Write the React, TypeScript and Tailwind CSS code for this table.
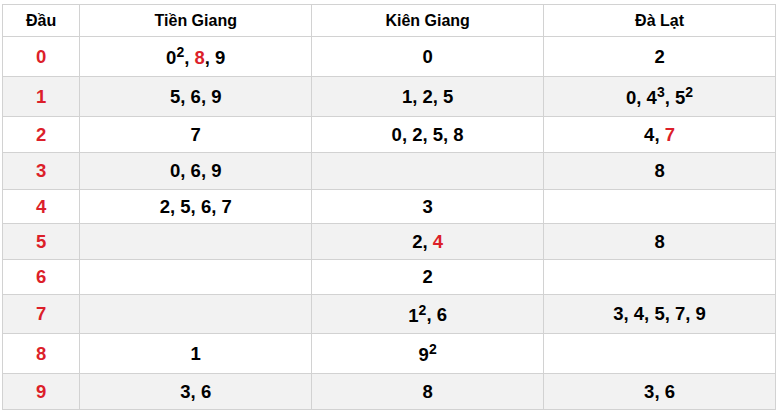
type Part = string | { n: string; sup?: string; red?: boolean };

interface Row {
  dau: string;
  h: string;
  cols: Part[][];
}

// each number: plain digit, or with a superscript count, or highlighted in red
const rows: Row[] = [
  { dau: '0', h: 'h-[40px]', cols: [[{ n: '0', sup: '2' }, { n: '8', red: true }, '9'], ['0'], ['2']] },
  { dau: '1', h: 'h-[40px]', cols: [['5', '6', '9'], ['1', '2', '5'], ['0', { n: '4', sup: '3' }, { n: '5', sup: '2' }]] },
  { dau: '2', h: 'h-[36px]', cols: [['7'], ['0', '2', '5', '8'], ['4', { n: '7', red: true }]] },
  { dau: '3', h: 'h-[37px]', cols: [['0', '6', '9'], [], ['8']] },
  { dau: '4', h: 'h-[34px]', cols: [['2', '5', '6', '7'], ['3'], []] },
  { dau: '5', h: 'h-[36px]', cols: [[], ['2', { n: '4', red: true }], ['8']] },
  { dau: '6', h: 'h-[35px]', cols: [[], ['2'], []] },
  { dau: '7', h: 'h-[39px]', cols: [[], [{ n: '1', sup: '2' }, '6'], ['3', '4', '5', '7', '9']] },
  { dau: '8', h: 'h-[40px]', cols: [['1'], [{ n: '9', sup: '2' }], []] },
  { dau: '9', h: 'h-[36px]', cols: [['3', '6'], ['8'], ['3', '6']] },
];

const headers = ['Tiền Giang', 'Kiên Giang', 'Đà Lạt'];

function Cell({ parts }: { parts: Part[] }) {
  return (
    <>
      {parts.map((p, i) => {
        const item = typeof p === 'string' ? { n: p } : p;
        return (
          <span key={i}>
            {i > 0 && ', '}
            <span className={'red' in item && item.red ? 'text-[#dc1f2a]' : ''}>{item.n}</span>
            {'sup' in item && item.sup && (
              <sup className="static align-super text-[14px] leading-[normal]">{item.sup}</sup>
            )}
          </span>
        );
      })}
    </>
  );
}

export default function App() {
  return (
    <div className="bg-white pl-[2px] pt-[4px] font-['Liberation_Sans',Arial,sans-serif] text-black">
      <table className="w-[774px] table-fixed border-collapse text-center font-bold leading-[normal]">
        <colgroup>
          <col className="w-[10%]" />
          <col className="w-[30%]" />
          <col className="w-[30%]" />
          <col className="w-[30%]" />
        </colgroup>
        <thead>
          <tr className="h-[32px] bg-white text-[16px]">
            <th className="border border-[#d2d2d2] py-[5px]">Đầu</th>
            {headers.map((h) => (
              <th key={h} className="border border-[#d2d2d2] py-[5px]">
                {h}
              </th>
            ))}
          </tr>
        </thead>
        <tbody className="text-[18.5px]">
          {rows.map((r, idx) => (
            <tr key={r.dau} className={`${r.h} ${idx % 2 === 1 ? 'bg-[#f2f2f2]' : 'bg-white'}`}>
              <td className="border border-[#d2d2d2] py-[5px] text-[#dc1f2a]">{r.dau}</td>
              {r.cols.map((c, ci) => (
                <td key={ci} className="border border-[#d2d2d2] py-[5px]">
                  <Cell parts={c} />
                </td>
              ))}
            </tr>
          ))}
        </tbody>
      </table>
    </div>
  );
}
